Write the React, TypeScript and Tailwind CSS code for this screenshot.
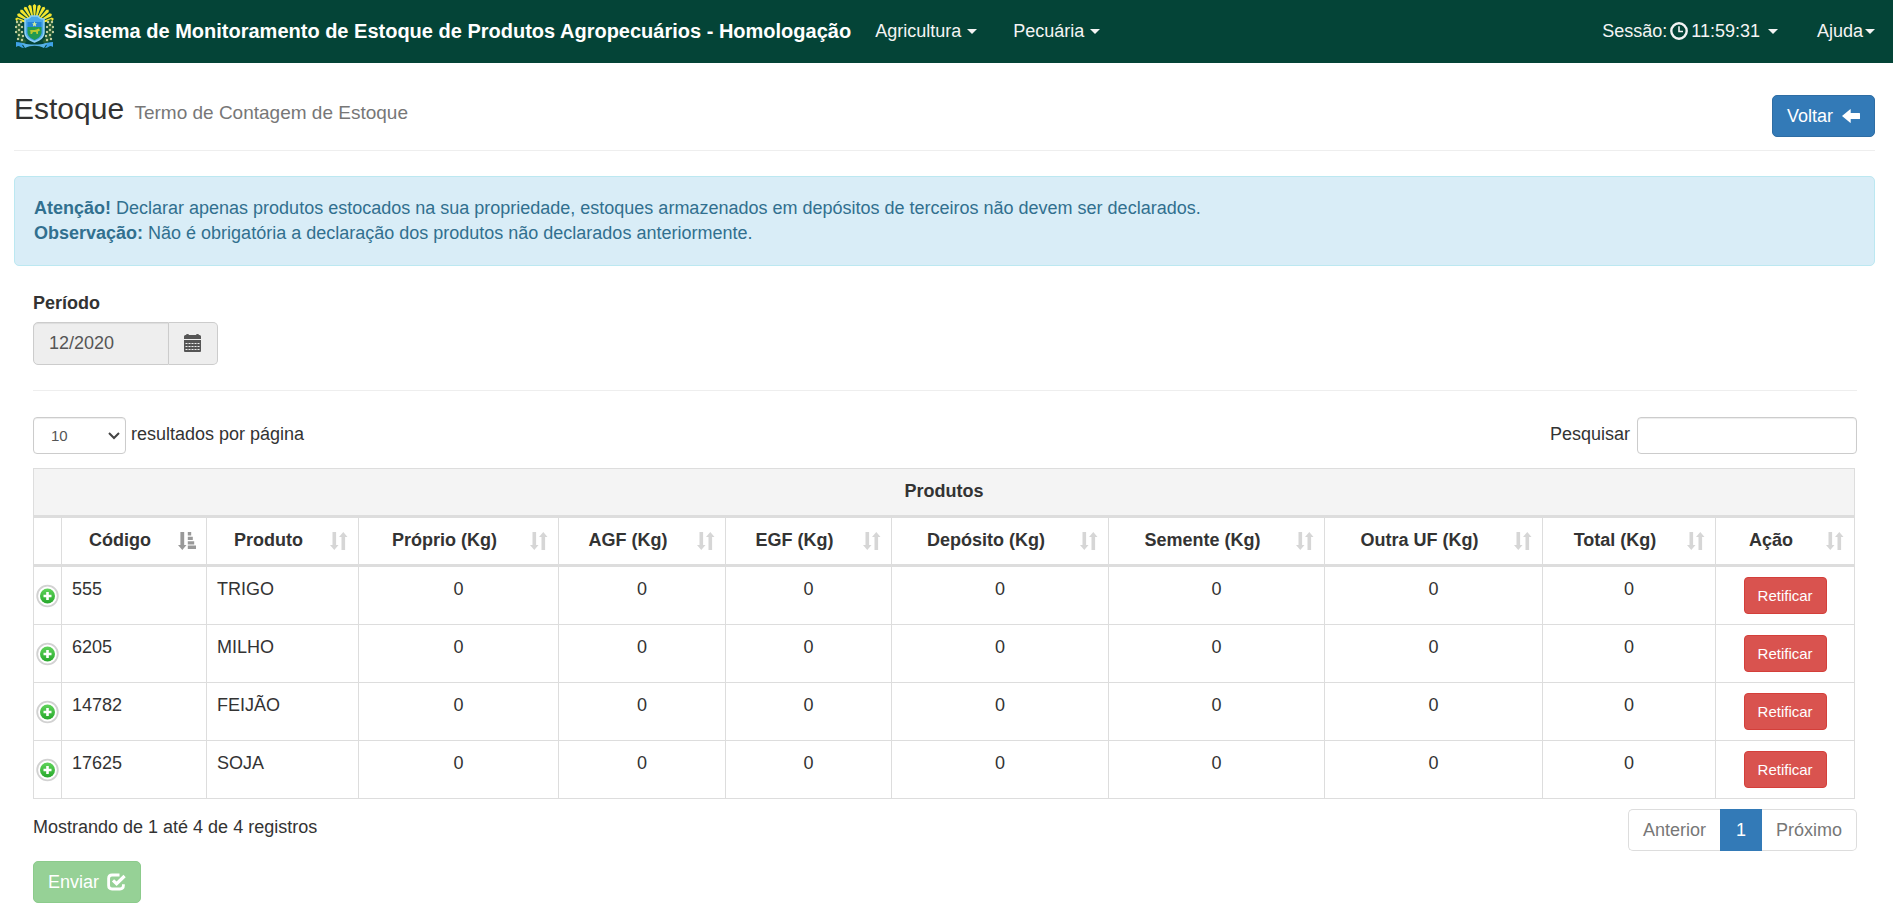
import { useState } from 'react';
import type { ReactNode } from 'react';

interface Produto {
  codigo: string;
  nome: string;
}

const PRODUTOS: Produto[] = [
  { codigo: '555', nome: 'TRIGO' },
  { codigo: '6205', nome: 'MILHO' },
  { codigo: '14782', nome: 'FEIJÃO' },
  { codigo: '17625', nome: 'SOJA' },
];

const COLUNAS = [
  { label: 'Código', width: 'w-[145px]' },
  { label: 'Produto', width: 'w-[152px]' },
  { label: 'Próprio (Kg)', width: 'w-[200px]' },
  { label: 'AGF (Kg)', width: 'w-[167px]' },
  { label: 'EGF (Kg)', width: 'w-[166px]' },
  { label: 'Depósito (Kg)', width: 'w-[217px]' },
  { label: 'Semente (Kg)', width: 'w-[216px]' },
  { label: 'Outra UF (Kg)', width: 'w-[218px]' },
  { label: 'Total (Kg)', width: 'w-[173px]' },
  { label: 'Ação', width: 'w-[139px]' },
];

const QUANTIDADES = ['proprio', 'agf', 'egf', 'deposito', 'semente', 'outraUf', 'total'];

const RAYS = [-75, -60, -45, -30, -15, 0, 15, 30, 45, 60, 75];

const LEAVES = [
  [2, 18], [6, 18], [4, 21], [1, 23], [7, 23], [4, 26], [1, 28], [7, 28], [4, 31], [8, 32], [3, 35], [7, 36],
];

function Crest() {
  return (
    <svg width="39" height="44" viewBox="0 0 39 44" aria-hidden="true">
      {RAYS.map((deg) => (
        <path
          key={deg}
          d="M19.5 20 17.8 1.5 19.5 0l1.700 1.500z"
          fill="#f4e62f"
          transform={`rotate(${deg} 19.5 20)`}
        />
      ))}
      {[1, -1].map((side) => (
        <g key={side} transform={side === 1 ? undefined : 'translate(39 0) scale(-1 1)'}>
          <path d="M5 16C2 22 3 33 10 39" stroke="#245c33" strokeWidth="5" fill="none" />
          {LEAVES.map(([x, y]) => (
            <circle key={`${x}-${y}`} cx={x} cy={y} r="1.2" fill="#c3cf9f" />
          ))}
          <path d="M1 38c4 0 7 1 10 2l-4 1 2 3c-3 0-4-2-6-2l-2 1z" fill="#3fa2e6" />
        </g>
      ))}
      <path d="M7 39c8 2 17 2 25 0l-3 5c-6-3-13-3-19 0z" fill="#58b2e6" />
      <path
        d="M10 15c3 0 5-1 6-3h7c1 2 3 3 6 3v13c0 6-5 8-9.500 10C15 36 10 34 10 28z"
        fill="#49a8ea"
        stroke="#8ed0f4"
        strokeWidth="1.500"
      />
      <path d="M12.500 18h14v10c0 4-3 6-7 8-4-2-7-4-7-8z" fill="#2486d6" />
      <path d="M12.500 23h14v5c0 4-3 6-7 8-4-2-7-4-7-8z" fill="#239a50" />
      <path d="m19.500 17.500.8 1.700 1.700.2-1.300 1.200.4 1.800-1.600-.9-1.600.9.4-1.800-1.300-1.200 1.700-.2z" fill="#d4f0a0" />
      <path d="M14.500 26.500c3-1 4 0 7-1l2.500-1 1 2-2 1v2.500h-1.500l-.5-2h-3l-1 2h-1.500v-2.500z" fill="#b9c92f" />
    </svg>
  );
}

function ClockIcon() {
  return (
    <svg width="18" height="18" viewBox="0 0 18 18" fill="none" stroke="currentColor" aria-hidden="true">
      <circle cx="9" cy="9" r="7.700" strokeWidth="2.400" />
      <path d="M9 4.200V9.500h4" strokeWidth="1.600" />
    </svg>
  );
}

function ArrowLeftIcon() {
  return (
    <svg width="18" height="14" viewBox="0 0 18 14" fill="currentColor" aria-hidden="true">
      <path d="M0 7 8.200.2q.5-.4.5.2V4h8.700q.6 0 .6.600v4.800q0 .6-.6.600H8.700v3.600q0 .6-.5.200z" />
    </svg>
  );
}

function CalendarIcon() {
  return (
    <svg width="17" height="18" viewBox="0 0 17 18" fill="currentColor" aria-hidden="true">
      <path d="M0 5V2.500Q0 1 1.500 1H2q0-1 1.500-1T5 1h7q0-1 1.500-1T15 1h.5Q17 1 17 2.500V5z" />
      <path d="M0 6h17v11q0 1-1 1H1q-1 0-1-1z" />
      <path
        d="M1.500 9.500h14M1.500 12.500h14M1.500 15.500h14"
        stroke="#eee"
        strokeWidth="1"
        strokeDasharray="2 1"
      />
    </svg>
  );
}

function CheckIcon() {
  return (
    <svg width="19" height="18" viewBox="0 0 19 18" fill="none" stroke="currentColor" aria-hidden="true">
      <path d="M12.500 2H5Q1.600 2 1.600 5.400v7.200Q1.600 16 5 16h8q3.400 0 3.400-3.400v-1.400" strokeWidth="2.800" />
      <path d="m6 7.300 3.600 3.400 8-7.700" strokeWidth="3.200" />
    </svg>
  );
}

function SortIcon({ active }: { active?: boolean }) {
  if (active) {
    return (
      <svg width="18" height="18" viewBox="0 0 18 18" fill="#999" className="shrink-0" aria-hidden="true">
        <path d="M2.400 0h3.800v13h2.300L4.300 18 0 13h2.400z" />
        <path d="M9.800 0h3.400v3.400H9.800zM9.800 4.700h5v3.400h-5zM9.800 9.200h6.400v3.400H9.800zM9.800 13.600H18V17H9.800z" />
      </svg>
    );
  }
  return (
    <svg width="18" height="18" viewBox="0 0 18 18" fill="#d6d6d6" className="shrink-0" aria-hidden="true">
      <path d="M2.500 0h3.600v13h2.400L4.300 18 0 13h2.500z" />
      <path d="M11.500 18h3.600V5h2.400L13.300 0 9 5h2.500z" />
    </svg>
  );
}

function PlusBadge() {
  return (
    <svg width="23" height="24" viewBox="0 0 23 24" aria-hidden="true">
      <defs>
        <linearGradient id="plus-green" x1="0" y1="0" x2="0" y2="1">
          <stop offset="0" stopColor="#5fd35a" />
          <stop offset="1" stopColor="#27a82c" />
        </linearGradient>
      </defs>
      <circle cx="11.500" cy="12" r="10.300" fill="#fff" stroke="#d2d2d2" strokeWidth="1.800" />
      <circle cx="11.500" cy="12" r="7.500" fill="url(#plus-green)" />
      <path d="M11.500 8v8M7.500 12h8" stroke="#fff" strokeWidth="2.600" />
    </svg>
  );
}

function Caret() {
  return (
    <svg width="10" height="5" viewBox="0 0 10 5" fill="currentColor" aria-hidden="true">
      <path d="M0 0h10L5 5z" />
    </svg>
  );
}

function NavItem({ children }: { children: ReactNode }) {
  return (
    <a href="#" className="flex items-center text-[#f4f4f4]">
      {children}
    </a>
  );
}

export default function App() {
  const [busca, setBusca] = useState('');
  const [porPagina, setPorPagina] = useState('10');

  const cell = 'border-b border-r border-[#ddd] p-[10px] align-top';

  return (
    <div className="min-h-screen bg-white font-['Liberation_Sans',Arial,sans-serif] text-[18px] leading-[25px] text-[#333]">
      {/* Navbar */}
      <nav className="flex h-[63px] items-center bg-[#044437] pb-[12px] pl-[15px] pr-[18px]">
        <a href="#" className="mr-[24px] flex items-center gap-[10px] whitespace-nowrap text-[20px] font-bold text-white">
          <Crest />
          <span className="pt-[11px]">Sistema de Monitoramento de Estoque de Produtos Agropecuários - Homologação</span>
        </a>
        <div className="flex flex-1 gap-[36px] pt-[11px]">
          <NavItem>
            <span className="mr-[6px]">Agricultura</span>
            <Caret />
          </NavItem>
          <NavItem>
            <span className="mr-[6px]">Pecuária</span>
            <Caret />
          </NavItem>
        </div>
        <div className="flex gap-[39px] pt-[11px]">
          <NavItem>
            <span className="mr-[3px]">Sessão:</span>
            <ClockIcon />
            <span className="ml-[3px] mr-[8px]">11:59:31</span>
            <Caret />
          </NavItem>
          <NavItem>
            <span className="mr-[2px]">Ajuda</span>
            <Caret />
          </NavItem>
        </div>
      </nav>

      <main className="pb-4 pl-[14px] pr-[18px]">
        {/* Page header */}
        <header className="flex items-start justify-between border-b border-[#eee] pb-[13px] pt-8">
          <h1 className="text-[30px] leading-[28px] text-[#333]">
            Estoque <small className="ml-[2px] text-[19px] text-[#777]">Termo de Contagem de Estoque</small>
          </h1>
          <button
            type="button"
            className="flex h-[42px] items-center gap-[9px] rounded-[5px] border border-[#2e6da4] bg-[#337ab7] px-[14px] text-white"
          >
            Voltar
            <ArrowLeftIcon />
          </button>
        </header>

        <div className="mt-[25px] rounded-[5px] border border-[#bce8f1] bg-[#d9edf7] p-[19px] text-[#31708f]">
          <p>
            <strong>Atenção!</strong> Declarar apenas produtos estocados na sua propriedade, estoques armazenados em
            depósitos de terceiros não devem ser declarados.
          </p>
          <p>
            <strong>Observação:</strong> Não é obrigatória a declaração dos produtos não declarados anteriormente.
          </p>
        </div>

        <div className="pl-[19px] pr-[18px] pt-[25px]">
          <label htmlFor="periodo" className="block font-bold">
            Período
          </label>
          <div className="mt-[6px] flex h-[43px]">
            <input
              id="periodo"
              type="text"
              readOnly
              value="12/2020"
              className="w-[136px] rounded-l-[5px] border border-[#ccc] bg-[#eee] px-[15px] text-[#555] shadow-[inset_0_1px_1px_rgba(0,0,0,0.075)]"
            />
            <button
              type="button"
              aria-label="Calendário"
              className="flex w-[49px] items-center justify-center rounded-r-[5px] border border-l-0 border-[#ccc] bg-[#eee] pb-[2px] pr-[2px] text-[#555]"
            >
              <CalendarIcon />
            </button>
          </div>

          <hr className="mt-[25px] border-[#eee]" />

          {/* Table controls */}
          <div className="mt-[26px] flex justify-between">
            <div className="flex gap-[5px]">
              <div className="relative">
                <select
                  id="por-pagina"
                  value={porPagina}
                  onChange={(e) => setPorPagina(e.target.value)}
                  className="h-[37px] w-[93px] appearance-none rounded-[4px] border border-[#ccc] bg-white pl-[17px] text-[15px] text-[#555] shadow-[inset_0_1px_1px_rgba(0,0,0,0.075)]"
                >
                  <option>10</option>
                  <option>25</option>
                  <option>50</option>
                  <option>100</option>
                </select>
                <svg
                  width="12"
                  height="8"
                  viewBox="0 0 12 8"
                  fill="none"
                  stroke="#444"
                  strokeWidth="2"
                  className="pointer-events-none absolute right-[6px] top-[15px]"
                  aria-hidden="true"
                >
                  <path d="m1 1 5 5 5-5" />
                </svg>
              </div>
              <label htmlFor="por-pagina" className="pt-[5px]">
                resultados por página
              </label>
            </div>
            <div className="flex gap-[7px]">
              <label htmlFor="pesquisar" className="pt-[5px]">
                Pesquisar
              </label>
              <input
                id="pesquisar"
                type="search"
                value={busca}
                onChange={(e) => setBusca(e.target.value)}
                className="h-[37px] w-[220px] rounded-[4px] border border-[#ccc] bg-white px-3 text-[15px] shadow-[inset_0_1px_1px_rgba(0,0,0,0.075)]"
              />
            </div>
          </div>

          <div className="mr-[2px] mt-[14px]">
            <table className="w-full table-fixed border-separate border-spacing-0 border-l border-t border-[#ddd]">
              <colgroup>
                <col className="w-[28px]" />
                {COLUNAS.map((c) => (
                  <col key={c.label} className={c.width} />
                ))}
              </colgroup>
              <thead>
                <tr>
                  <th colSpan={11} className="border-b-[3px] border-r border-[#ddd] bg-[#f4f4f4] p-[10px] pb-[11px]">
                    Produtos
                  </th>
                </tr>
                <tr>
                  <th className="border-b-[3px] border-r border-[#ddd]" />
                  {COLUNAS.map((c, i) => (
                    <th key={c.label} className="border-b-[3px] border-r border-[#ddd] p-0">
                      <button
                        type="button"
                        className="flex w-full items-center gap-[10px] whitespace-nowrap p-[10px] pb-[11px] font-bold"
                      >
                        <span className="flex-1">{c.label}</span>
                        <SortIcon active={i === 0} />
                      </button>
                    </th>
                  ))}
                </tr>
              </thead>
              <tbody>
                {PRODUTOS.map((p) => (
                  <tr key={p.codigo}>
                    <td className="border-b border-r border-[#ddd] p-0 align-middle">
                      <button type="button" aria-label={`Detalhes ${p.nome}`} className="flex w-full justify-center">
                        <PlusBadge />
                      </button>
                    </td>
                    <td className={cell}>{p.codigo}</td>
                    <td className={cell}>{p.nome}</td>
                    {QUANTIDADES.map((q) => (
                      <td key={q} className={`${cell} text-center`}>
                        0
                      </td>
                    ))}
                    <td className={cell}>
                      <button
                        type="button"
                        className="mx-auto flex h-[37px] items-center rounded-[4px] border border-[#d43f3a] bg-[#d9534f] px-[13px] text-[15px] text-white"
                      >
                        Retificar
                      </button>
                    </td>
                  </tr>
                ))}
              </tbody>
            </table>
          </div>

          {/* Footer */}
          <div className="mt-[10px] flex items-start justify-between">
            <p className="pt-[6px]">Mostrando de 1 até 4 de 4 registros</p>
            <div className="flex h-[42px]">
              <button type="button" className="rounded-l-[5px] border border-r-0 border-[#ddd] px-[14px] text-[#777]">
                Anterior
              </button>
              <button type="button" className="w-[42px] bg-[#337ab7] text-white">
                1
              </button>
              <button type="button" className="rounded-r-[5px] border border-l-0 border-[#ddd] px-[14px] text-[#777]">
                Próximo
              </button>
            </div>
          </div>

          <button
            type="button"
            className="mt-[10px] flex h-[42px] items-center gap-[8px] rounded-[5px] border border-[#8ccb8c] bg-[#96d196] px-[14px] text-white"
          >
            Enviar
            <CheckIcon />
          </button>
        </div>
      </main>
    </div>
  );
}
